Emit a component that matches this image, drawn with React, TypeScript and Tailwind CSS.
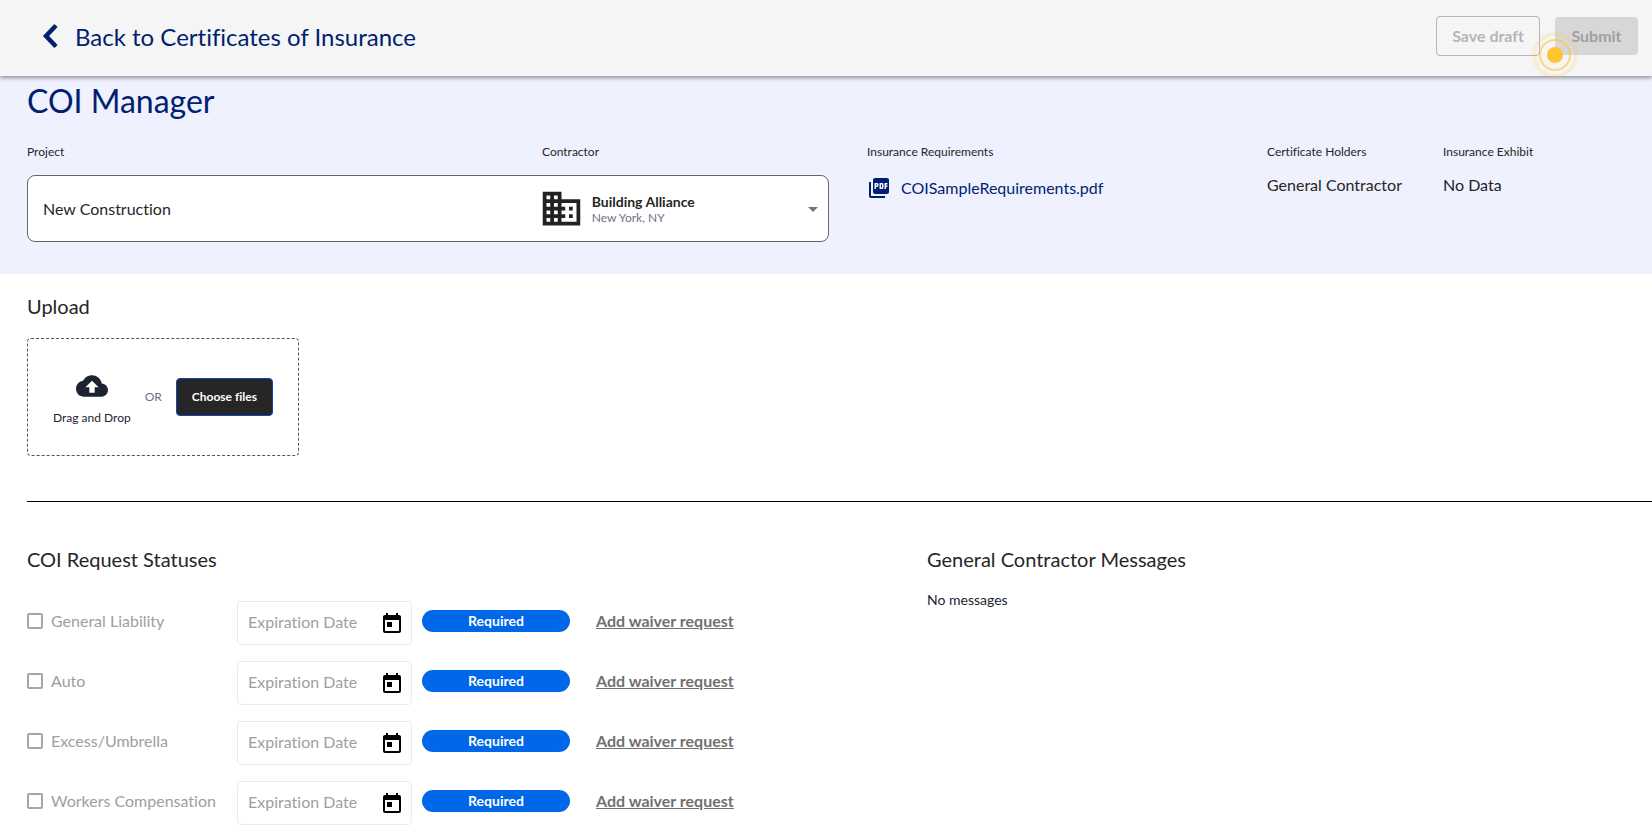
import { useState } from 'react'
import { MdArrowDropDown, MdBackup, MdBusiness, MdPictureAsPdf, MdToday } from 'react-icons/md'

const coverages = [
  { id: 'general-liability', label: 'General Liability' },
  { id: 'auto', label: 'Auto' },
  { id: 'excess-umbrella', label: 'Excess/Umbrella' },
  { id: 'workers-compensation', label: 'Workers Compensation' },
]

function Header() {
  return (
    <header className="relative z-10 flex h-[76px] items-center justify-between bg-[#f5f5f5] pr-3.5 pl-[41px] shadow-[0_2px_4px_rgba(0,0,0,0.4)]">
      <a href="#" className="flex items-center gap-4 pb-1 text-2xl text-[#001f70]">
        <svg width="18" height="26" viewBox="0 0 18 26" fill="none" aria-hidden="true">
          <path d="M15 2.500 L5 13 L15 23.500" stroke="currentColor" strokeWidth="4.500" />
        </svg>
        <span className="pt-0.5">Back to Certificates of Insurance</span>
      </a>
      <div className="flex items-center gap-[15px] pb-1">
        <button type="button" disabled className="h-10 rounded border border-[#b5b5b5] px-[15px] font-bold text-[#b5b5b5]">
          Save draft
        </button>
        <div className="relative">
          <button type="button" disabled className="h-[38px] w-[83px] rounded bg-[#d7d7d7] font-bold text-[#a0a0a0]">
            Submit
          </button>
          {/* Tour beacon */}
          <span className="absolute -bottom-[23px] -left-[23px] flex size-[46px] items-center justify-center rounded-full border-4 border-[#ffc531]/15">
            <span className="flex size-8 shrink-0 items-center justify-center rounded-full border-2 border-[#ffc531]/60">
              <span className="size-4 rounded-full bg-[#ffc531]" />
            </span>
          </span>
        </div>
      </div>
    </header>
  )
}

function ProjectSummary() {
  return (
    <section className="bg-[#eff1fe] px-[27px] pt-[5px] pb-8 text-[#262626]">
      <h1 className="text-[32px] leading-10 text-[#001f70]">COI Manager</h1>
      <div className="mt-[23px] grid grid-cols-[802fr_362fr_138fr_182fr] gap-x-[38px] whitespace-nowrap">
        <div>
          <div className="grid grid-cols-[515fr_287fr] text-xs leading-4">
            <span id="project-label">Project</span>
            <span id="contractor-label">Contractor</span>
          </div>
          <button
            type="button"
            aria-haspopup="listbox"
            aria-labelledby="project-label contractor-label"
            className="mt-[15px] grid h-[67px] w-full grid-cols-[515fr_287fr] items-center rounded-lg border border-[#666] bg-white text-left"
          >
            <span className="pl-[15px] text-base">New Construction</span>
            <span className="flex items-center">
              <MdBusiness size={45} className="-ml-[3px] shrink-0 text-[#222]" />
              <span className="ml-2 flex flex-1 flex-col pt-0.5">
                <span className="text-sm leading-4 font-bold">Building Alliance</span>
                <span className="text-xs leading-4 text-[#6f7285]">New York, NY</span>
              </span>
              <MdArrowDropDown size={24} className="mr-[3px] text-[#757575]" />
            </span>
          </button>
        </div>
        <div>
          <div className="text-xs leading-4">Insurance Requirements</div>
          <a href="#" className="mt-4 flex items-center gap-2.5 text-base text-[#001f70]">
            <MdPictureAsPdf size={24} />
            COISampleRequirements.pdf
          </a>
        </div>
        <div>
          <div className="text-xs leading-4">Certificate Holders</div>
          <div className="mt-[13px] text-base">General Contractor</div>
        </div>
        <div>
          <div className="text-xs leading-4">Insurance Exhibit</div>
          <div className="mt-[13px] text-base text-[#1b2430]">No Data</div>
        </div>
      </div>
    </section>
  )
}

function Upload() {
  return (
    <section className="ml-[27px] border-b border-black pt-[18px] pb-[45px]">
      <h2 className="text-xl text-[#262626]">Upload</h2>
      <div className="mt-[18px] flex h-[118px] w-[272px] items-center justify-center gap-3.5 rounded border border-dashed border-[#555]">
        <div className="flex flex-col items-center gap-2 pt-px text-xs text-[#1b2430]">
          <MdBackup size={32} />
          Drag and Drop
        </div>
        <span className="text-xs text-[#64748b]">OR</span>
        <button type="button" className="h-[38px] rounded border border-[#0a47b8] bg-[#262626] px-[15px] text-xs font-bold text-white">
          Choose files
        </button>
      </div>
    </section>
  )
}

function CoverageRow({ id, label }: { id: string; label: string }) {
  const [date, setDate] = useState('')

  return (
    <div className="flex h-11 items-center">
      <div className="flex w-[210px] shrink-0 items-center gap-2 pb-1 text-[#9e9e9e]">
        <input id={id} type="checkbox" disabled className="size-4 shrink-0 appearance-none rounded-xs border-2 border-[#a6a6a6]" />
        <label htmlFor={id}>{label}</label>
      </div>
      <div className="flex h-11 w-[175px] shrink-0 items-center rounded border border-[#ebebeb] pr-[7px] pl-2.5">
        <input
          type="text"
          value={date}
          onChange={e => setDate(e.target.value)}
          placeholder="Expiration Date"
          aria-label={`${label} expiration date`}
          className="min-w-0 flex-1 pb-0.5 outline-none placeholder:text-[#9e9e9e]"
        />
        <button type="button" aria-label="Choose date" className="pt-0.5 text-black">
          <MdToday size={24} />
        </button>
      </div>
      <span className="mb-1 ml-2.5 h-[22px] w-[148px] shrink-0 rounded-full bg-[#0067e8] text-center text-sm leading-[22px] font-bold text-white">
        Required
      </span>
      <a href="#" className="mb-1 ml-[26px] font-bold text-[#707070] underline">
        Add waiver request
      </a>
    </div>
  )
}

export default function App() {
  return (
    <div className="bg-white font-['Lato',sans-serif] text-base [font-variant-ligatures:none]">
      <Header />
      <main>
        <ProjectSummary />
        <Upload />
        <div className="grid grid-cols-[900fr_725fr] pt-[43px] pl-[27px] whitespace-nowrap">
          <section>
            <h2 className="text-xl text-[#262626]">COI Request Statuses</h2>
            <div className="mt-7 flex flex-col gap-4">
              {coverages.map(c => (
                <CoverageRow key={c.id} id={c.id} label={c.label} />
              ))}
            </div>
          </section>
          <section>
            <h2 className="text-xl text-[#262626]">General Contractor Messages</h2>
            <p className="mt-[17px] text-sm text-[#1b2430]">No messages</p>
          </section>
        </div>
      </main>
    </div>
  )
}
